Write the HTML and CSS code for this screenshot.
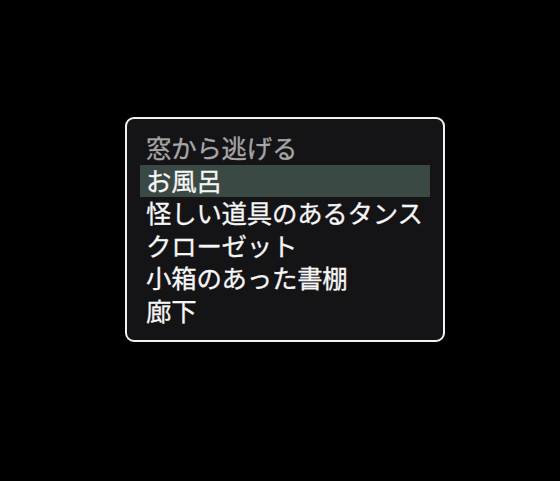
FILE: index.html
```html
<!DOCTYPE html>
<html lang="ja">
<head>
<meta charset="utf-8">
<link rel="stylesheet" href="styles.css">
</head>
<body>
<div class="stage">
  <div class="menu">
    <div class="item title">窓から逃げる</div>
    <div class="item selected">お風呂</div>
    <div class="item">怪しい道具のあるタンス</div>
    <div class="item">クローゼット</div>
    <div class="item">小箱のあった書棚</div>
    <div class="item">廊下</div>
  </div>
</div>
</body>
</html>
```
FILE: styles.css
```css
html, body {
  margin: 0;
  background: #000;
}
.stage {
  width: 560px;
  height: 481px;
  padding: 117px 0 0 125px;
  box-sizing: border-box;
}
.menu {
  width: 320px;
  height: 225px;
  box-sizing: border-box;
  border: 2px solid #f2f2f2;
  border-radius: 9px;
  background: #141316;
  padding: 13px 13px 0 13px;
  font-family: "Noto Sans CJK JP", sans-serif;
  font-size: 25.4px;
  font-weight: 400;
  color: #f6f6f6;
  -webkit-text-stroke: 0.3px #f6f6f6;
}
.item {
  height: 32.5px;
  line-height: 31.5px;
  padding-left: 6px;
  width: 290px;
  box-sizing: border-box;
  white-space: nowrap;
  letter-spacing: -0.2px;
}
.title {
  color: #a6a6a6;
  -webkit-text-stroke: 0.3px #a6a6a6;
}
.selected {
  background: #3a4944;
}
```
